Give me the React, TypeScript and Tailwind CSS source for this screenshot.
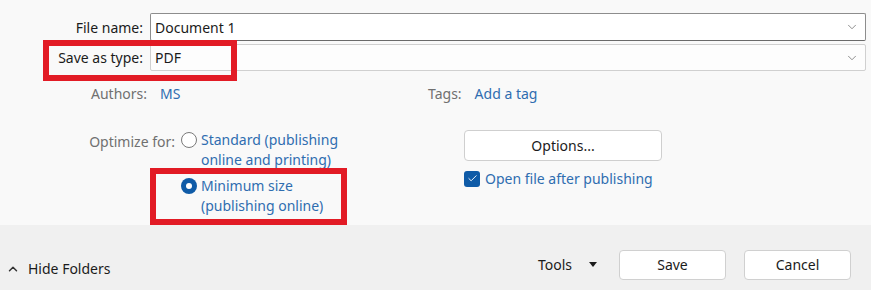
import { ChevronDown, ChevronUp, Check } from 'lucide-react';

const font = { fontFamily: '"Noto Sans", "Open Sans", sans-serif' };

export default function App() {
  return (
    <div className="relative w-[871px] h-[290px] overflow-hidden text-[14px] text-[#1b1b1b]" style={font}>
      {/* form area */}
      <div className="h-[225px] bg-[#f9f9f9] pt-[13px] pr-[5px]">
        <div className="flex items-center h-[28px]">
          <div className="w-[144px] text-right pr-[1px]">File name:</div>
          <div className="ml-[6px] flex-1 h-[28px] flex items-center justify-between bg-white border border-[#8d8d8d] border-b-[#6a6a6a] rounded-[2px] pl-[4px] pr-[6px]">
            <span>Document 1</span>
            <ChevronDown size={14} strokeWidth={1.2} className="text-[#606060]" />
          </div>
        </div>
        <div className="flex items-center h-[27px] mt-[3px]">
          <div className="w-[144px] text-right pr-[1px]">Save as type:</div>
          <div className="ml-[6px] flex-1 h-[27px] flex items-center justify-between bg-[#fdfdfd] border border-[#d0d0d0] rounded-[2px] pl-[4px] pr-[6px]">
            <span>PDF</span>
            <ChevronDown size={14} strokeWidth={1.2} className="text-[#606060]" />
          </div>
        </div>

        <div className="flex items-center mt-[12px] h-[20px]">
          <div className="w-[147px] text-right text-[#707070]">Authors:</div>
          <div className="ml-[13px] w-[268px] text-[#2f6db0]">MS</div>
          <div className="text-[#707070]">Tags:</div>
          <div className="ml-[13px] text-[#2f6db0]">Add a tag</div>
        </div>

        <div className="flex mt-[27px]">
          <div className="w-[175px] text-right text-[#707070] pt-[1px]">Optimize for:</div>
          <div className="ml-[6px] w-[283px] flex flex-col gap-[6px] text-[#2f6db0] leading-[20px]">
            <div className="flex items-start gap-[4px]">
              <span className="mt-[2px] w-[16px] h-[16px] rounded-full border border-[#7a7a7a] bg-white shrink-0" />
              <span>Standard (publishing<br />online and printing)</span>
            </div>
            <div className="flex items-start gap-[4px]">
              <span className="mt-[2px] w-[16px] h-[16px] rounded-full bg-[#0f5ba7] flex items-center justify-center shrink-0">
                <span className="w-[6px] h-[6px] rounded-full bg-white" />
              </span>
              <span>Minimum size<br />(publishing online)</span>
            </div>
          </div>
          <div className="flex flex-col">
            <button className="w-[198px] h-[31px] bg-white border border-[#cfcfcf] rounded-[4px] text-[#1b1b1b]">Options...</button>
            <div className="flex items-center gap-[5px] mt-[7px] text-[#2f6db0]">
              <span className="w-[16px] h-[16px] rounded-[3px] bg-[#0f5ba7] flex items-center justify-center">
                <Check size={11} strokeWidth={2} className="text-white" />
              </span>
              <span>Open file after publishing</span>
            </div>
          </div>
        </div>
      </div>

      {/* bottom bar */}
      <div className="h-[65px] bg-[#f0f0f0] flex items-center pr-[20px]">
        <div className="flex items-center gap-[8px] pl-[6px] translate-y-[11px]">
          <ChevronUp size={14} strokeWidth={2.5} className="text-[#333]" />
          <span>Hide Folders</span>
        </div>
        <div className="ml-auto flex items-center h-[30px] translate-y-[7px]">
          <span>Tools</span>
          <span className="ml-[17px] w-0 h-0 border-l-[4.5px] border-r-[4.5px] border-t-[5px] border-l-transparent border-r-transparent border-t-[#1b1b1b]" />
          <button className="ml-[22px] w-[107px] h-[30px] bg-white border border-[#d0d0d0] rounded-[4px]">Save</button>
          <button className="ml-[18px] w-[107px] h-[30px] bg-white border border-[#d0d0d0] rounded-[4px]">Cancel</button>
        </div>
      </div>

      {/* red annotation boxes */}
      <div className="absolute left-[43px] top-[40px] w-[194px] h-[41px] border-[6px] border-[#e21b25]" />
      <div className="absolute left-[150px] top-[168px] w-[197px] h-[57px] border-[6px] border-[#e21b25]" />
    </div>
  );
}
